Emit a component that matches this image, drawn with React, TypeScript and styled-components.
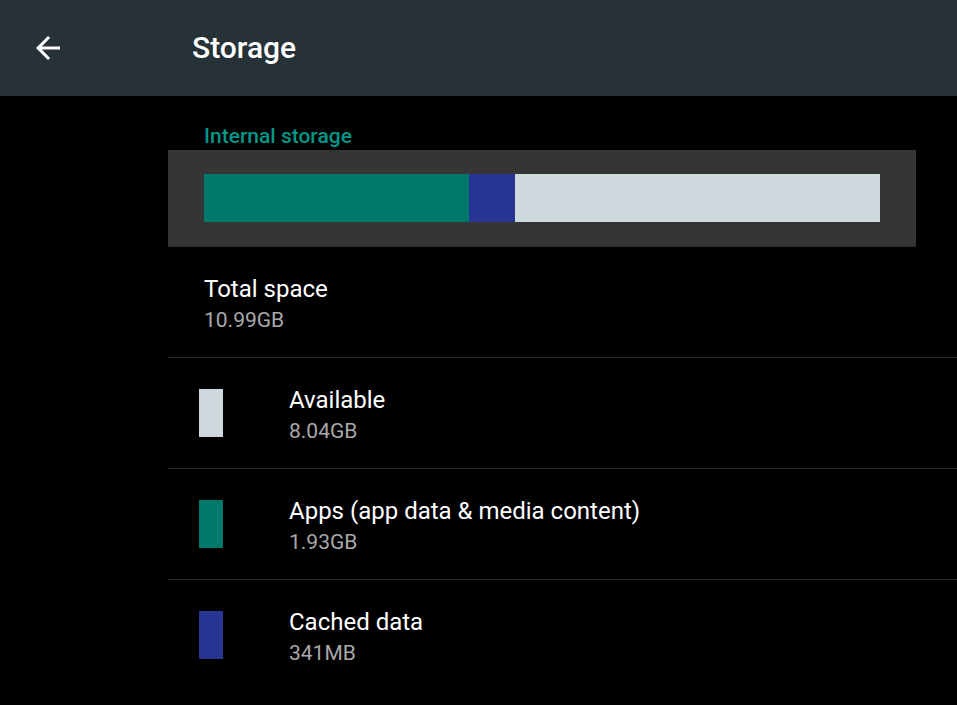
import React from "react";
import styled, { createGlobalStyle } from "styled-components";

const Global = createGlobalStyle`
  html, body { margin: 0; padding: 0; background: #000; }
  body { font-family: Roboto, "Noto Sans", "Liberation Sans", sans-serif; overflow: hidden; }
  * { box-sizing: border-box; }
`;

const Page = styled.div`
  width: 957px;
  height: 705px;
  background: #000;
  display: flex;
  flex-direction: column;
  overflow: hidden;
`;

const Toolbar = styled.header`
  height: 96px;
  flex: none;
  background: #263238;
  display: flex;
  align-items: center;
  padding-left: 30px;
`;

const NavButton = styled.div`
  width: 36px;
  height: 36px;
  display: flex;
  align-items: center;
  justify-content: center;
  color: #fff;
`;

const Title = styled.h1`
  margin: 0 0 0 126px;
  font-size: 30px;
  font-weight: 500;
  line-height: 96px;
  color: #fff;
`;

const Content = styled.main`
  margin-left: 168px;
  display: flex;
  flex-direction: column;
`;

const SectionHeader = styled.div`
  padding: 28px 0 2px 36px;
  font-size: 21px;
  font-weight: 500;
  line-height: 24px;
  color: #009688;
`;

const BarPanel = styled.div`
  margin-right: 41px;
  height: 97px;
  padding: 24px 36px 25px;
  background: #353535;
  border-bottom: 1px solid #2a2a2a;
`;

const Bar = styled.div`
  height: 48px;
  display: flex;
`;

const Segment = styled.div<{ $color: string }>`
  height: 100%;
  background: ${(p) => p.$color};
`;

const Row = styled.div<{ $last?: boolean }>`
  height: 111px;
  display: flex;
  align-items: center;
  border-bottom: 1px solid ${(p) => (p.$last ? "transparent" : "#262626")};
`;

const Swatch = styled.div<{ $color: string }>`
  width: 24px;
  height: 48px;
  margin-left: 31px;
  margin-right: 66px;
  flex: none;
  background: ${(p) => p.$color};
`;

const TextBlock = styled.div<{ $indent?: boolean }>`
  display: flex;
  flex-direction: column;
  padding-top: 3px;
  margin-left: ${(p) => (p.$indent ? "36px" : "0")};
`;

const ItemTitle = styled.div`
  font-size: 24px;
  line-height: 30px;
  color: #fff;
`;

const ItemSub = styled.div`
  margin-top: 3px;
  font-size: 21px;
  line-height: 26px;
  color: #a9a9a9;
`;

const TEAL = "#00796B";
const INDIGO = "#283593";
const LIGHT = "#CFD8DC";

const segments = [
  { color: TEAL, width: 265 },
  { color: INDIGO, width: 46 },
  { color: LIGHT, width: 365 },
];

const items = [
  { color: LIGHT, title: "Available", sub: "8.04GB" },
  { color: TEAL, title: "Apps (app data & media content)", sub: "1.93GB" },
  { color: INDIGO, title: "Cached data", sub: "341MB" },
];

export default function App() {
  return (
    <Page>
      <Global />
      <Toolbar>
        <NavButton>
          <svg width="36" height="36" viewBox="0 0 24 24" fill="currentColor">
            <path d="M20 11H7.83l5.59-5.59L12 4l-8 8 8 8 1.41-1.41L7.83 13H20v-2z" />
          </svg>
        </NavButton>
        <Title>Storage</Title>
      </Toolbar>
      <Content>
        <SectionHeader>Internal storage</SectionHeader>
        <BarPanel>
          <Bar>
            {segments.map((s, i) => (
              <Segment key={i} $color={s.color} style={{ width: s.width }} />
            ))}
          </Bar>
        </BarPanel>
        <Row>
          <TextBlock $indent>
            <ItemTitle>Total space</ItemTitle>
            <ItemSub>10.99GB</ItemSub>
          </TextBlock>
        </Row>
        {items.map((it, i) => (
          <Row key={it.title} $last={i === items.length - 1}>
            <Swatch $color={it.color} />
            <TextBlock>
              <ItemTitle>{it.title}</ItemTitle>
              <ItemSub>{it.sub}</ItemSub>
            </TextBlock>
          </Row>
        ))}
      </Content>
    </Page>
  );
}
